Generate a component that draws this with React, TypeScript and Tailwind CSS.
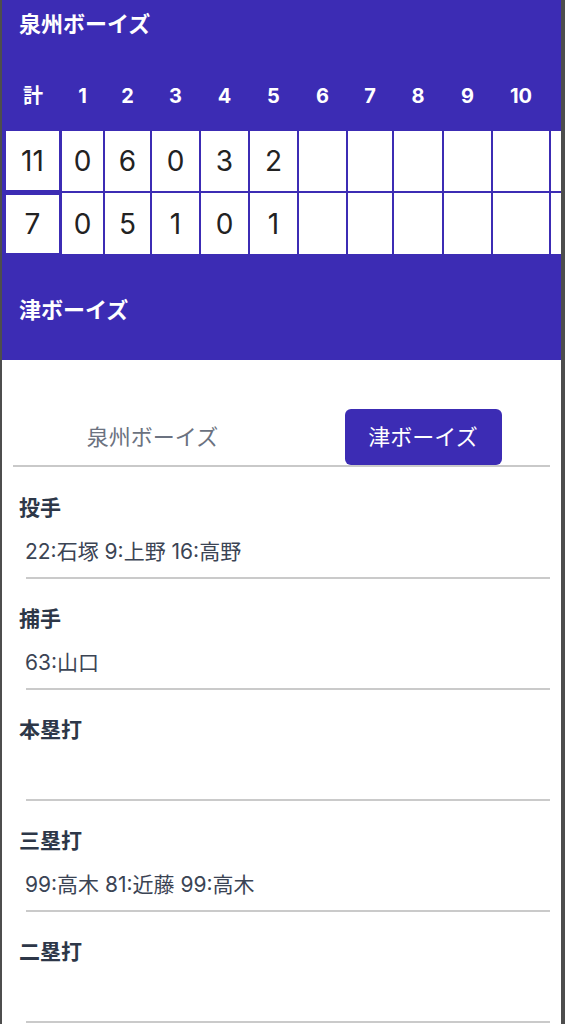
const home = [0, 6, 0, 3, 2, null, null, null, null, null, null];
const away = [0, 5, 1, 0, 1, null, null, null, null, null, null];

const stats = [
  { label: '投手', value: '22:石塚 9:上野 16:高野' },
  { label: '捕手', value: '63:山口' },
  { label: '本塁打', value: '' },
  { label: '三塁打', value: '99:高木 81:近藤 99:高木' },
  { label: '二塁打', value: '' },
];

const font = { fontFamily: '"Inter", "Noto Sans CJK JP", sans-serif' };

const grid =
  'grid grid-cols-[54px_41px_45px_47px_47px_47px_47px_44px_48px_47px_56px_48px] gap-x-[2px]';

const ScoreRow = ({ total, runs, first }: { total: number; runs: (number | null)[]; first?: boolean }) => (
  <>
    <div className={first ? 'self-start' : 'self-center mt-[1px]'}>
      <div
        className={`w-[53px] ${first ? 'h-[59px]' : 'h-[58px]'} bg-white flex items-center justify-center text-[28px] text-[#222]`}
      >
        {total}
      </div>
    </div>
    {runs.map((r, i) => (
      <div key={i} className="bg-white flex items-center justify-center text-[28px] text-[#222]">
        {r ?? ''}
      </div>
    ))}
  </>
);

export default function App() {
  return (
    <div className="min-h-[1024px] bg-[#4d4d4d] pl-[2px] pr-[4px] overflow-hidden" style={font}>
      <div className="bg-white min-h-[1024px]">
        {/* scoreboard */}
        <div className="bg-[#3c2cb4] pb-[34px] overflow-hidden">
          <div className="pt-[8px] pl-[17px] text-[22px] leading-[32px] font-bold text-white">泉州ボーイズ</div>

          <div className={`${grid} ml-[4px] mt-[40px] h-[32px] items-center text-[20px] font-bold text-white text-center`}>
            <div>計</div>
            {[1, 2, 3, 4, 5, 6, 7, 8, 9, 10, 11].map((n) => (
              <div key={n}>{n === 11 ? '' : n}</div>
            ))}
          </div>

          <div className={`${grid} grid-rows-[60px_61px] gap-y-[2px] ml-[4px] mt-[19px]`}>
            <ScoreRow total={11} runs={home} first />
            <ScoreRow total={7} runs={away} />
          </div>

          <div className="mt-[40px] pl-[17px] text-[22px] leading-[32px] font-bold text-white">津ボーイズ</div>
        </div>

        {/* tabs */}
        <div className="pt-[49px] px-[11px]">
          <div className="ml-[5px] w-[538px] grid grid-cols-2 items-center">
            <button className="h-[56px] text-[22px] text-[#6b7280]">泉州ボーイズ</button>
            <div className="flex justify-center pl-[3px]">
              <button className="h-[56px] w-[157px] rounded-md bg-[#3c2cb4] text-[22px] text-white">
                津ボーイズ
              </button>
            </div>
          </div>
          <div className="h-[2px] w-[537px] bg-[#c9c9c9]" />
        </div>

        {/* stats */}
        <div className="pl-[17px] pr-[11px] pt-[26px]">
          {stats.map((s) => (
            <div key={s.label} className="mb-[25px]">
              <div className="h-[30px] leading-[30px] text-[21px] font-bold text-[#2d3748]">{s.label}</div>
              <div className="mt-[14px] h-[30px] leading-[30px] pl-[6px] text-[21px] text-[#3b4454]">
                {s.value}
              </div>
              <div className="mt-[10px] ml-[7px] h-[2px] bg-[#cacaca]" />
            </div>
          ))}
        </div>
      </div>
    </div>
  );
}
